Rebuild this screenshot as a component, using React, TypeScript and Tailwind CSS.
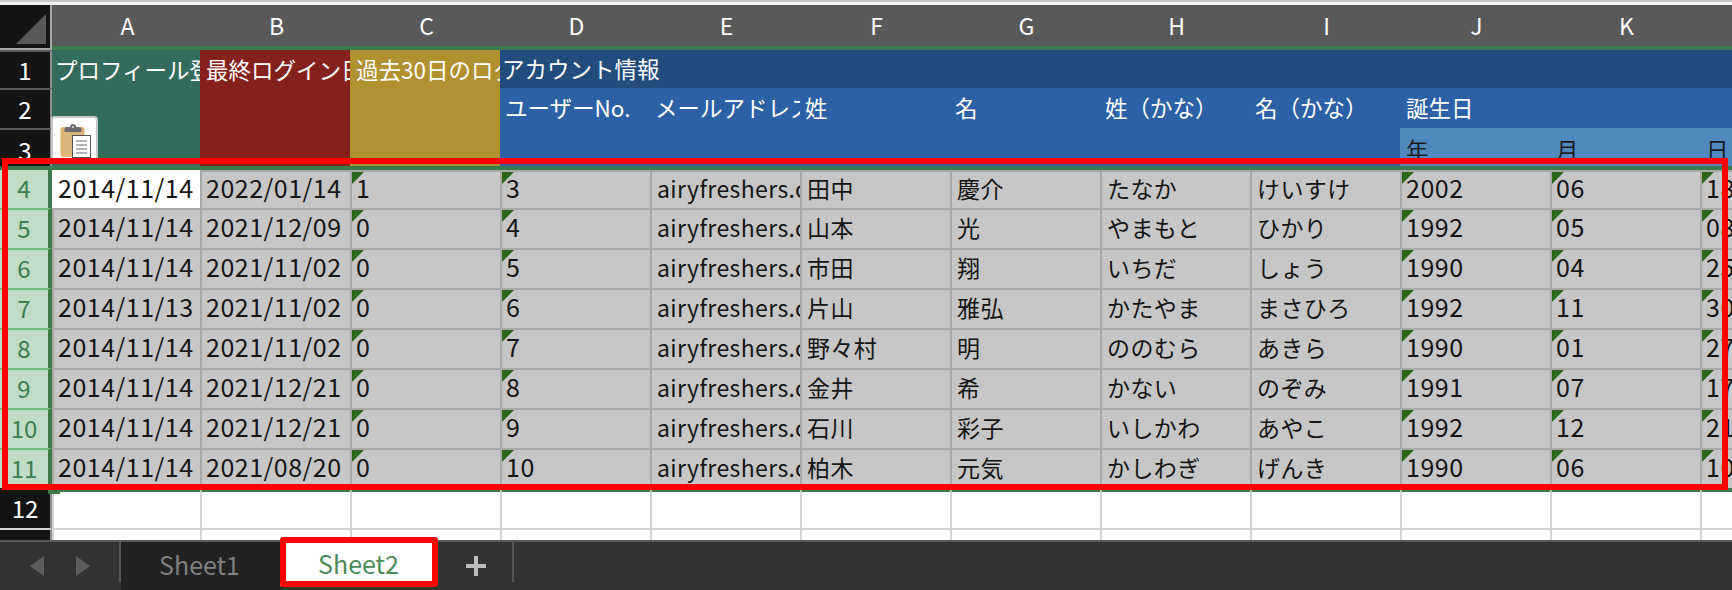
const columns = ["A", "B", "C", "D", "E", "F", "G", "H", "I", "J", "K", "L"];

const rows = [
  ["2014/11/14", "2022/01/14", "1", "3", "airyfreshers.com", "田中", "慶介", "たなか", "けいすけ", "2002", "06", "18"],
  ["2014/11/14", "2021/12/09", "0", "4", "airyfreshers.com", "山本", "光", "やまもと", "ひかり", "1992", "05", "08"],
  ["2014/11/14", "2021/11/02", "0", "5", "airyfreshers.com", "市田", "翔", "いちだ", "しょう", "1990", "04", "25"],
  ["2014/11/13", "2021/11/02", "0", "6", "airyfreshers.com", "片山", "雅弘", "かたやま", "まさひろ", "1992", "11", "30"],
  ["2014/11/14", "2021/11/02", "0", "7", "airyfreshers.com", "野々村", "明", "ののむら", "あきら", "1990", "01", "27"],
  ["2014/11/14", "2021/12/21", "0", "8", "airyfreshers.com", "金井", "希", "かない", "のぞみ", "1991", "07", "17"],
  ["2014/11/14", "2021/12/21", "0", "9", "airyfreshers.com", "石川", "彩子", "いしかわ", "あやこ", "1992", "12", "21"],
  ["2014/11/14", "2021/08/20", "0", "10", "airyfreshers.com", "柏木", "元気", "かしわぎ", "げんき", "1990", "06", "10"],
];

// columns whose cells carry the green "number stored as text" flag
const flagged = [2, 3, 9, 10, 11];

const headerRow2 = ["ユーザーNo.", "メールアドレス", "姓", "名", "姓（かな）", "名（かな）"];

function RowHead({ n }: { n: number }) {
  return (
    <div
      className={`flex items-center justify-center bg-[#141414] border-r-2 border-t-2 border-[#8f8f8f] border-t-[#5a5a5a] text-white text-[24px] ${
        n === 3 ? "pt-[3px]" : ""
      } ${n === 1 ? "pb-[1px]" : ""}`}
    >
      {n}
    </div>
  );
}

function SelectedRowHead({ n, first }: { n: number; first: boolean }) {
  return (
    <div
      className={`flex items-center justify-center pb-[3px] bg-[#c0dbc6] text-[#3c7d52] text-[24px] border-r-4 border-r-[#3c7a4e] ${
        first ? "" : "border-t-2 border-t-[#72b878]"
      }`}
    >
      {n}
    </div>
  );
}

function Cell({ text, flag, active, col }: { text: string; flag: boolean; active: boolean; col: number }) {
  const digits = /^[\d/]+$/.test(text);
  return (
    <div
      className={`relative flex items-center overflow-hidden whitespace-nowrap text-[#151515] border-t-2 border-l-2 ${
        digits ? "text-[25px] tracking-[0.5px] pl-[4px] pb-[4px]" : "text-[23px] tracking-[0.4px] pl-[5px] pb-[3px]"
      } ${active ? "bg-white border-white" : "bg-[#c6c6c6] border-[#a9a9a9]"} ${col === 0 ? "border-l-0" : ""}`}
    >
      {flag && (
        <span className="absolute left-0 top-0 w-[12px] h-[12px] bg-[#2b661b] [clip-path:polygon(0_0,100%_0,0_100%)]" />
      )}
      {text}
    </div>
  );
}

function PasteIcon() {
  return (
    <div className="absolute left-[51px] top-[116px] w-[47px] h-[46px] bg-white rounded-[4px] border-2 border-[#c9c9c9] border-b-0 flex items-start justify-center pt-[4px]">
      <svg width="32" height="36" viewBox="0 0 32 36">
        <rect x="1.5" y="5" width="24" height="30" rx="2" fill="#dcb578" />
        <path d="M5.5 10 L5.5 7 Q5.5 5 8 5 L11 5 Q11 2 14 2 Q17 2 17 5 L20 5 Q22.5 5 22.5 7 L22.5 10 Z" fill="#6b6b6e" />
        <rect x="13" y="4" width="2" height="2" fill="#c8c8c8" />
        <rect x="13.5" y="13.5" width="18" height="22" fill="#fff" stroke="#555" />
        <path d="M17 19h11M17 23h11M17 27h11M17 31h11" stroke="#b5b5b5" strokeWidth="2" />
      </svg>
    </div>
  );
}

export default function App() {
  return (
    <div className="relative w-[1732px] h-[590px] overflow-hidden bg-white flex flex-col font-['Noto_Sans_CJK_JP','Noto_Sans',sans-serif]">
      <div className="h-[5px] shrink-0 bg-[#f2f2f2] border-t-2 border-t-[#c8c8c8]" />

      <div className="flex-1 overflow-hidden">
        <div className="grid grid-cols-[52px_148px_repeat(11,150px)] grid-rows-[45px_38px_40px_38px_4px_38px_repeat(7,40px)_40px_40px]">
          {/* column letters */}
          <div className="relative bg-[#141414] border-b-2 border-r-2 border-[#a8a8a8]">
            <span className="absolute right-[4px] bottom-[4px] w-[30px] h-[30px] bg-[#595959] [clip-path:polygon(100%_0,100%_100%,0_100%)]" />
          </div>
          {columns.map((c) => (
            <div
              key={c}
              className="flex items-center justify-center pl-[3px] bg-[#595959] border-b-4 border-[#3c7a4e] text-white text-[23px]"
            >
              {c}
            </div>
          ))}

          {/* rows 1 to 3, the first three columns are merged */}
          <RowHead n={1} />
          <div className="row-span-3 overflow-hidden whitespace-nowrap bg-[#336b5c] text-white text-[22.5px] leading-[38px] pl-[3px]">
            プロフィール登録日
          </div>
          <div className="row-span-3 overflow-hidden whitespace-nowrap bg-[#85211c] text-white text-[22.5px] leading-[38px] pl-[6px]">
            最終ログイン日
          </div>
          <div className="row-span-3 overflow-hidden whitespace-nowrap bg-[#b0902f] text-white text-[22.5px] leading-[38px] pl-[6px]">
            過去30日のログイン数
          </div>
          <div className="col-span-9 flex items-center bg-[#214c7c] text-white text-[22.5px] pl-[2px]">アカウント情報</div>

          <RowHead n={2} />
          {headerRow2.map((t) => (
            <div
              key={t}
              className="flex items-center bg-[#2c61a5] text-white text-[22.5px] overflow-hidden whitespace-nowrap pl-[5px]"
            >
              {t}
            </div>
          ))}
          <div className="col-span-3 flex items-center bg-[#2c61a5] text-white text-[22.5px] pl-[6px]">誕生日</div>

          <RowHead n={3} />
          <div className="col-span-6 bg-[#2c61a5]" />
          <div className="flex items-center bg-[#4f89bf] text-[#1b1b1b] text-[22.5px] pl-[6px] pt-[6px]">年</div>
          <div className="flex items-center bg-[#4f89bf] text-[#1b1b1b] text-[22.5px] pl-[6px] pt-[6px]">月</div>
          <div className="flex items-center bg-[#4f89bf] text-[#1b1b1b] text-[22.5px] pl-[6px] pt-[6px]">日</div>

          {/* selection edge */}
          <div className="col-span-full bg-[#3c7a4e]" />

          {/* selected rows */}
          {rows.map((row, r) => (
            <div key={r} className="contents">
              <SelectedRowHead n={r + 4} first={r === 0} />
              {row.map((text, c) => (
                <Cell key={c} text={text} col={c} flag={flagged.includes(c)} active={r === 0 && c === 0} />
              ))}
            </div>
          ))}

          {/* empty rows */}
          {[12, 13].map((n) => (
            <div key={n} className="contents">
              <div
                className={`flex items-center justify-center bg-[#141414] text-white text-[24px] border-r-2 border-[#8f8f8f] ${
                  n === 12 ? "" : "border-t-2 border-t-[#d4d4d4]"
                }`}
              >
                {n}
              </div>
              {columns.map((c) => (
                <div
                  key={c}
                  className={`border-l-2 border-[#d4d4d4] ${n === 12 ? "border-t-4 border-t-[#3c7a4e]" : "border-t-2"}`}
                />
              ))}
            </div>
          ))}
        </div>
      </div>

      {/* sheet tabs */}
      <div className="h-[50px] shrink-0 bg-[#333333] border-t-2 border-[#5a5a5a] flex items-stretch">
        <div className="w-[121px] flex items-center gap-[32px] pl-[30px] border-r-2 border-[#555555] mb-[8px] pt-[8px]">
          <svg width="14" height="20" viewBox="0 0 14 20">
            <path d="M14 0 L0 10 L14 20 Z" fill="#5f5f5f" />
          </svg>
          <svg width="14" height="20" viewBox="0 0 14 20">
            <path d="M0 0 L14 10 L0 20 Z" fill="#5f5f5f" />
          </svg>
        </div>
        <div className="w-[159px] bg-[#222222] flex items-center justify-center pb-[2px] pr-[2px] text-[#808080] text-[25px]">Sheet1</div>
        <div className="w-[157px] mb-[4px] bg-white flex items-center justify-center text-[#4a8a5c] text-[25px]">Sheet2</div>
        <div className="w-[77px] flex items-center justify-center pl-[3px] border-r-2 border-[#555555] mb-[8px] pt-[8px]">
          <svg width="20" height="20" viewBox="0 0 20 20">
            <path d="M8 0h4v8h8v4h-8v8h-4v-8h-8v-4h8z" fill="#bdbdbd" />
          </svg>
        </div>
      </div>

      <PasteIcon />

      {/* fill handle of the selection */}
      <div className="absolute left-[48px] top-[488px] w-[12px] h-[6px] bg-[#3c7a4e]" />

      {/* red annotation frames */}
      <div className="absolute left-[2px] top-[158px] w-[1726px] h-[332px] border-[6px] border-[#ff0000]" />
      <div className="absolute left-[280px] top-[537px] w-[158px] h-[50px] border-[6px] border-[#ff0000] rounded-[3px]" />
    </div>
  );
}
